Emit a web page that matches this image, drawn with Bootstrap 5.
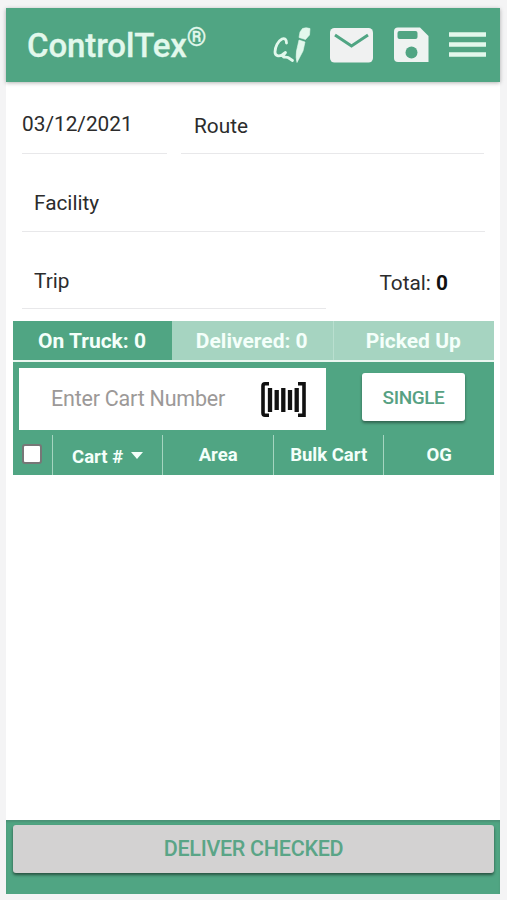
<!DOCTYPE html>
<html lang="en">
<head>
<meta charset="utf-8">
<meta name="viewport" content="width=device-width, initial-scale=1">
<title>ControlTex</title>
<link href="https://cdn.jsdelivr.net/npm/bootstrap@5.3.0/dist/css/bootstrap.min.css" rel="stylesheet">
<style>
:root { --brand: #50a583; --brand-soft: #a6d4c1; --paper: #e2f8ec; }
body { background: #f4f4f5; font-family: Roboto, "Liberation Sans", sans-serif; font-size: 20.8px; line-height: 24px; color: #2c2c2c; padding: 8px 7px 6px 6px; height: 900px; overflow: hidden; }
.app { height: 886px; }
.topbar { height: 74px; background: var(--brand); padding: 0 14px 0 21px; box-shadow: 0 1px 4px rgba(0,0,0,.3); flex: none; }
.brand-name { color: var(--paper); font-size: 33px; line-height: 40px; font-weight: 500; letter-spacing: -.1px; -webkit-text-stroke: .3px var(--paper); padding-top: 2px; }
.brand-name sup { font-size: 25px; top: -.43em; letter-spacing: 0; line-height: 0; }
.tool { line-height: 0; }
.form-area { padding: 0 15px 0 16px; height: 239px; flex: none; }
.line-field { border-bottom: 1px solid #e8e8ea; }
.f-date { width: 145px; height: 72px; padding-top: 30px; }
.f-route { width: 303px; height: 72px; padding: 32px 0 0 13px; margin-right: 1px; }
.f-facility { height: 78px; padding: 37px 0 0 12px; }
.f-trip { width: 304px; height: 77px; padding: 37px 0 0 12px; }
.total { padding: 39px 37px 0 0; }
.total b { color: #111; font-weight: 700; }
.grid-box { margin: 0 6px 0 7px; flex: none; }
.tabs { height: 41px; border-bottom: 2px solid #eaf7f0; background: var(--brand-soft); color: #f4fffa; font-weight: 700; font-size: 21px; }
.tabs > div { flex: 1 1 0; padding: 1px 1px 0 0; }
.tabs .on { flex: 0 0 159px; background: var(--brand); }
.tabs .last { border-left: 1px solid #b9dfcf; }
.panel { background: var(--brand); color: #f4fffa; height: 113px; padding-top: 6px; }
.cart-input { margin-left: 6px; width: 307px; height: 62px; background: #fff; padding: 0 20px 0 32px; color: #9c9998; font-size: 21.5px; }
.cart-input span { letter-spacing: -.22px; }
.single { margin: 0 29px 4px 0; width: 103px; height: 48px; border-radius: 3px; background: #fff; color: #57a183; font-size: 19px; letter-spacing: -.4px; font-weight: 500; line-height: 24px; padding: 2px 0 0; border: 0; box-shadow: 0 2px 3px rgba(0,0,0,.4); }
.heads { height: 40px; margin-top: 5px; font-size: 18.5px; font-weight: 700; }
.heads > div { border-left: 1px solid #a5d5c0; width: 111px; }
.heads .pick { width: 39px; border: 0; padding: 0 0 2px; }
.tick { width: 20px; height: 20px; background: #fff; border: 2px solid #777; border-radius: 3px; }
.bottom { height: 74px; background: var(--brand); padding: 5px 6px 0 7px; box-shadow: inset 0 2px 2px rgba(70,110,95,.35); flex: none; }
.deliver { height: 48px; border: 0; border-radius: 3px; background: #d3d2d2; color: #5aa587; font-size: 21.5px; letter-spacing: -.3px; font-weight: 500; line-height: 24px; padding: 0; box-shadow: 0 2px 3px rgba(0,0,0,.5); }
</style>
</head>
<body>
<main class="app bg-white d-flex flex-column">
  <header class="topbar d-flex align-items-center">
    <div class="brand-name me-auto">ControlTex<sup>®</sup></div>
    <div class="tool"><svg width="38" height="36" viewBox="0 0 38 36" style="margin-right:19px"><path d="M13.500 16C13.500 12 11.500 11 9 12C5 14 2 20 2 25C2 29 6 29.500 9 28L12.500 25.500L10 28.500C9.500 31 13 29.500 15 30.500L19.500 33.500" fill="none" stroke="#e2f8ec" stroke-width="2.800" stroke-linecap="round" stroke-linejoin="round"/><path d="M29.500 1.500Q33 0 37 1.500L36.500 8L32.500 12.500L26 10.500L27 5ZM26 13L32 15L30 24L24 35.500Q22.500 31 23.500 24Z" fill="#e2f8ec" stroke="#e2f8ec" stroke-width=".6" stroke-linejoin="round"/></svg></div>
    <div class="tool"><svg width="43" height="35" viewBox="0 0 43 35" style="margin-right:21px"><rect width="43" height="34.5" rx="4.5" fill="#f0f1f1"/><path d="M5 7L21.5 18L38 7" fill="none" stroke="#50a583" stroke-width="3"/></svg></div>
    <div class="tool"><svg width="35" height="36" viewBox="0 0 35 36" style="margin-right:20px"><path d="M4 .5H26L34.500 9V35H4Q0 35 0 31V4.500Q0 .5 4 .5Z" fill="#eef3f1"/><rect x="3.500" y="4" width="20" height="8" rx="2" fill="#50a583"/><circle cx="17.500" cy="25.500" r="6" fill="#50a583"/></svg></div>
    <div class="tool"><svg width="37" height="26" viewBox="0 0 37 26"><path d="M0 2.500H37M0 12.500H37M0 22.500H37" stroke="#e2f8ec" stroke-width="4.600"/></svg></div>
  </header>

  <section class="form-area">
    <div class="d-flex justify-content-between">
      <div class="line-field f-date">03/12/2021</div>
      <div class="line-field f-route">Route</div>
    </div>
    <div class="line-field f-facility">Facility</div>
    <div class="d-flex justify-content-between">
      <div class="line-field f-trip">Trip</div>
      <div class="total">Total: <b>0</b></div>
    </div>
  </section>

  <section class="grid-box">
    <div class="tabs d-flex text-center align-items-stretch">
      <div class="on d-flex align-items-center justify-content-center">On Truck: 0</div>
      <div class="d-flex align-items-center justify-content-center">Delivered: 0</div>
      <div class="last d-flex align-items-center justify-content-center">Picked Up</div>
    </div>
    <div class="panel">
      <div class="d-flex justify-content-between align-items-center">
        <div class="cart-input d-flex align-items-center justify-content-between">
          <span>Enter Cart Number</span>
          <svg width="45" height="35" viewBox="0 0 45 35"><path d="M8 1.800H4Q2 1.800 2 4V31Q2 33.200 4 33.200H8M37 1.800H43V33.200H37" fill="none" stroke="#111" stroke-width="3.600"/><path d="M9 6V30M15.700 8V28M22.300 6V30M29 8V28M35.700 6V30" stroke="#111" stroke-width="4.300"/></svg>
        </div>
        <button class="single btn" type="button">SINGLE</button>
      </div>
      <div class="heads d-flex">
        <div class="pick d-flex align-items-center justify-content-center"><span class="tick"></span></div>
        <div class="d-flex align-items-center justify-content-center pt-1">Cart #<svg class="ms-2 mb-1" width="12" height="7" viewBox="0 0 12 7"><path d="M0 0H12L6 7Z" fill="#f4fffa"/></svg></div>
        <div class="d-flex align-items-center justify-content-center">Area</div>
        <div class="d-flex align-items-center justify-content-center">Bulk Cart</div>
        <div class="d-flex align-items-center justify-content-center">OG</div>
      </div>
    </div>
  </section>

  <footer class="bottom mt-auto">
    <button class="deliver btn w-100 d-block" type="button">DELIVER CHECKED</button>
  </footer>
</main>
<script src="https://cdn.jsdelivr.net/npm/bootstrap@5.3.0/dist/js/bootstrap.bundle.min.js"></script>
</body>
</html>
